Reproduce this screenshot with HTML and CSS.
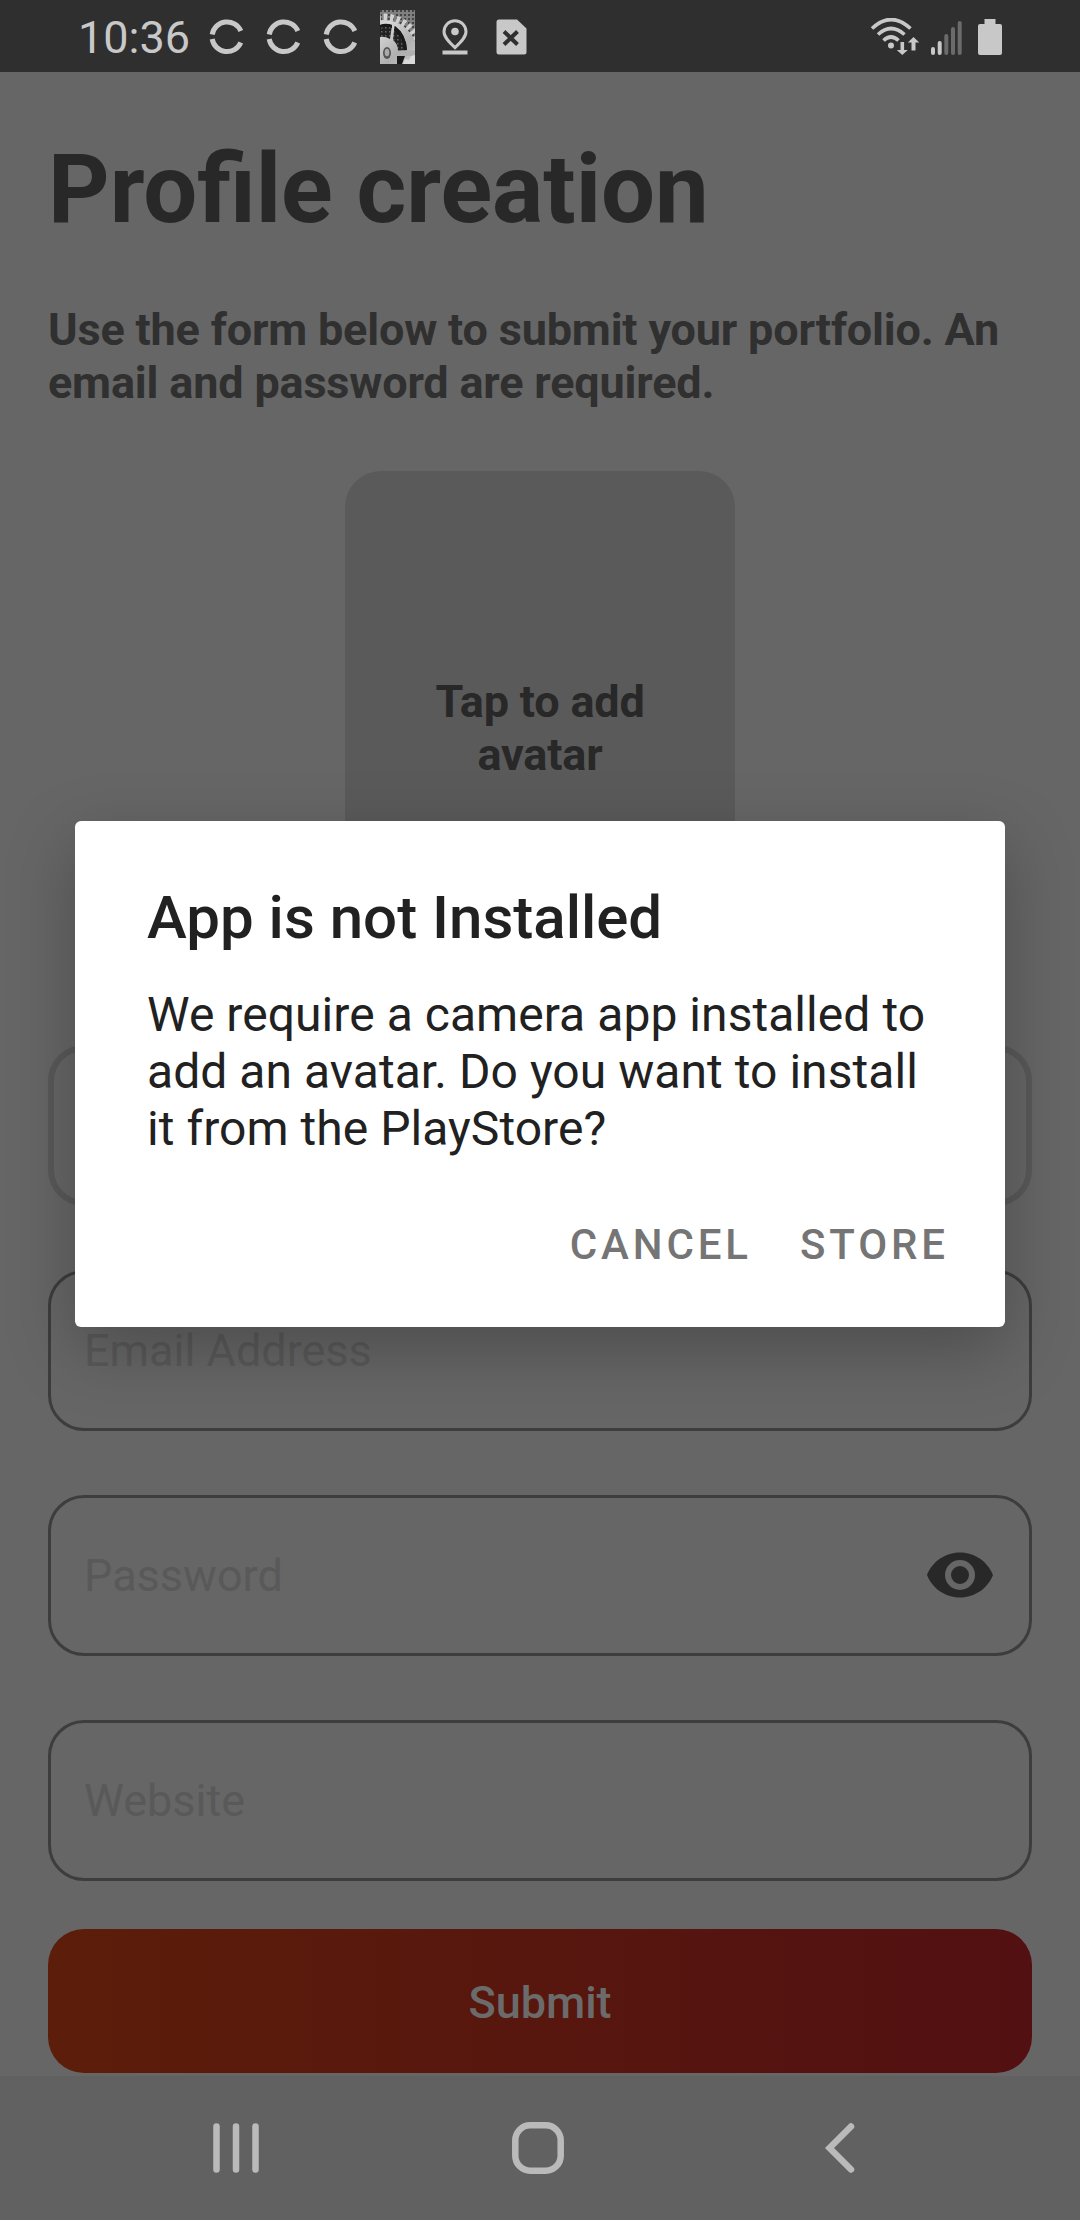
FILE: index.html
```html
<!DOCTYPE html>
<html lang="en">
<head>
<meta charset="utf-8">
<title>Profile creation</title>
<link rel="stylesheet" href="styles.css">
</head>
<body>
<div class="screen">
  <header class="status">
    <span class="clock">10:36</span>
    <div class="notices">
      <svg class="sync" viewBox="0 0 36 36"><path d="M3.200 15.500A15 15 0 0 1 31.800 12M3.200 20A15 15 0 0 0 31.800 23.500"/></svg>
      <svg class="sync" viewBox="0 0 36 36"><path d="M3.200 15.500A15 15 0 0 1 31.800 12M3.200 20A15 15 0 0 0 31.800 23.500"/></svg>
      <svg class="sync" viewBox="0 0 36 36"><path d="M3.200 15.500A15 15 0 0 1 31.800 12M3.200 20A15 15 0 0 0 31.800 23.500"/></svg>
      <svg class="gear" viewBox="0 0 35 54">
        <defs>
          <linearGradient id="metal" x1="0" y1="0" x2="1" y2="1"><stop offset="0" stop-color="#aaa"/><stop offset=".3" stop-color="#d8d8d8"/><stop offset=".6" stop-color="#b0b0b0"/><stop offset="1" stop-color="#dcdcdc"/></linearGradient>
          <pattern id="mesh" width="4" height="4" patternUnits="userSpaceOnUse"><rect width="4" height="4" fill="#808080"/><rect width="2" height="2" fill="#444"/></pattern>
          <pattern id="grille" width="4" height="4" patternUnits="userSpaceOnUse"><rect width="4" height="4" fill="#222"/><rect x="1" y="1" width="1.500" height="1.500" fill="#666"/></pattern>
        </defs>
        <rect width="35" height="54" fill="url(#mesh)"/>
        <path d="M26 37h9v17H26z" fill="#2a2a2a"/>
        <circle cx="4" cy="43" r="36" fill="none" stroke="#d0d0d0" stroke-width="7" stroke-dasharray="3.500 3"/>
        <circle cx="4" cy="43" r="33" fill="url(#metal)"/>
        <path d="M0 15Q6 13 12 15L10 29Q5 26 0 27z" fill="url(#grille)"/>
        <path d="M0 15Q6 12.500 12 15v3Q6 15 0 18z" fill="#181818"/>
        <path d="M14.500 16Q26 24 27 40l-9 1Q18 34 13 30z" fill="url(#grille)"/>
        <path d="M15 16Q26 24 27 40l-3 .500Q23 28 14.500 20zM17 46h8l-3 8h-5z" fill="#1a1a1a"/>
        <path d="M18 40.500h17V46H18z" fill="#b0b0b0"/>
        <path d="M23 54l2-5 4 1 2-4 4-1v9z" fill="#dadada"/>
        <ellipse cx="7" cy="43" rx="4" ry="6" fill="#555"/>
        <ellipse cx="7" cy="42.500" rx="2.300" ry="3.800" fill="#aaa"/>
      </svg>
      <svg class="pin" viewBox="0 0 26 36"><path d="M13 1.800C6.700 1.800 2 6.800 2 12.800 2 18.500 7.500 23.500 13 28.700 18.500 23.500 24 18.500 24 12.800 24 6.800 19.300 1.800 13 1.800z" fill="none" stroke="#c8c8c8" stroke-width="3"/><circle cx="13" cy="12.500" r="3.800" fill="#c8c8c8"/><path d="M.5 31.500h25v4H.5z" fill="#c8c8c8"/></svg>
      <svg class="doc" viewBox="0 0 31 36"><path d="M3 .5h18L30.500 9.500V33q0 2.500-2.500 2.500H3Q.5 35.500.5 33V3Q.5.500 3 .500z" fill="#c8c8c8"/><path d="m8 12.500 13.500 13M21.500 12.500 8 25.500" stroke="#2f2f2f" stroke-width="4"/></svg>
    </div>
    <div class="signals">
      <svg class="wifi" viewBox="0 0 50 38"><g fill="none" stroke="#c8c8c8" stroke-width="3.600"><path d="M2 10.500Q21-7.500 40.500 10.500M8 16.500Q21 4.500 34.500 16.500M13.500 22.500Q21 15.500 28.500 22.500"/></g><circle cx="21" cy="27.500" r="3" fill="#c8c8c8"/><path d="M30.500 24v8h-3.700l5.500 5 5.500-5h-3.700v-8zM41.500 32.500v-8h-3.700l5.700-5.500 5.700 5.500h-3.700v8z" fill="#c8c8c8"/></svg>
      <svg class="cell" viewBox="0 0 32 36"><path d="M2 30v4M8.700 24v10" stroke="#c8c8c8"/><path d="M15.300 17v17M22 10v24M28.700 4v30" stroke="#6b6b6b"/></svg>
      <svg class="battery" viewBox="0 0 24 36"><path d="M6.500 0h11v5H22q2 0 2 2v27q0 2-2 2H2q-2 0-2-2V7q0-2 2-2h4.500z" fill="#c8c8c8"/></svg>
    </div>
  </header>

  <main class="page">
    <h1 class="title">Profile creation</h1>
    <p class="intro">Use the form below to submit your portfolio. An email and password are required.</p>
    <div class="avatar"><span class="avatar-label">Tap to add avatar</span></div>
    <form class="fields">
      <div class="field field-active"></div>
      <div class="field">Email Address</div>
      <div class="field">Password
        <svg class="eye" viewBox="0 0 66 46"><path fill="#282828" fill-rule="evenodd" d="M33 .500C18 .500 5.200 9.800 0 23 5.200 36.200 18 45.500 33 45.500S60.800 36.200 66 23C60.800 9.800 48 .500 33 .500zM33 38A15 15 0 1 1 33 8a15 15 0 0 1 0 30zM33 14a9 9 0 1 0 0 18 9 9 0 0 0 0-18z"/></svg>
      </div>
      <div class="field">Website</div>
    </form>
    <div class="submit">Submit</div>
  </main>

  <nav class="navbar">
    <svg class="nav-recents" viewBox="0 0 46 50"><path d="M3.500 3.500v43M23 3.500v43M42.500 3.500v43"/></svg>
    <svg class="nav-home" viewBox="0 0 52 52"><rect x="3.300" y="3.300" width="45.400" height="45.400" rx="15"/></svg>
    <svg class="nav-back" viewBox="0 0 30 50"><path d="M26 3.500 4.500 25 26 46.500"/></svg>
  </nav>

  <section class="dialog">
    <h2 class="dialog-title">App is not Installed</h2>
    <p class="dialog-text">We require a camera app installed to add an avatar. Do you want to install it from the PlayStore?</p>
    <div class="dialog-actions"><span>CANCEL</span><span>STORE</span></div>
  </section>
</div>
</body>
</html>
```
FILE: styles.css
```css
* { box-sizing: border-box; margin: 0; padding: 0; }
body { font-family: Roboto, sans-serif; background: #666; }
svg { display: block; flex: none; }

.screen { position: relative; width: 1080px; height: 2220px; display: flex; flex-direction: column; overflow: hidden; background: #666; }

.status { height: 72px; flex: none; display: flex; align-items: center; padding: 2px 78px 0; background: #2f2f2f; color: #c8c8c8; }
.clock { width: 131px; font-size: 45px; line-height: 53px; white-space: nowrap; }
.notices { display: flex; align-items: center; }
.sync { width: 36px; height: 36px; margin-right: 21px; fill: none; stroke: #c8c8c8; stroke-width: 5; }
.gear { width: 35px; height: 54px; margin-right: 27px; }
.pin { width: 26px; height: 36px; margin-right: 28px; }
.doc { width: 31px; height: 36px; }
.signals { display: flex; margin-left: auto; align-items: center; }
.wifi { width: 50px; height: 38px; margin-right: 11px; }
.cell { width: 32px; height: 36px; margin-right: 15px; stroke-width: 4; stroke-linecap: round; }
.battery { width: 24px; height: 36px; }

.page { flex: none; height: 2004px; padding: 61px 48px 0; display: flex; flex-direction: column; }
.title { font-size: 95.7px; line-height: 112px; font-weight: 700; color: #282828; }
.intro { margin-top: 58px; font-size: 45px; line-height: 53px; font-weight: 700; letter-spacing: -0.18px; color: #303030; }
.avatar { flex: none; width: 390px; height: 514px; margin: 62px auto 0; border-radius: 36px; background: #5a5a5a; display: flex; align-items: center; justify-content: center; }
.avatar-label { width: 260px; text-align: center; font-size: 45px; line-height: 53px; font-weight: 700; letter-spacing: -0.2px; color: #282828; }
.fields { margin-top: 60px; display: flex; flex-direction: column; gap: 64px; }
.field { height: 161px; border: 3px solid #3d3d3d; border-radius: 36px; padding: 0 36px 0 33px; display: flex; align-items: center; justify-content: space-between; font-size: 45px; color: #595959; }
.field-active { border: 6px solid #595959; }
.eye { width: 66px; height: 46px; margin-bottom: 2px; }
.submit { flex: none; height: 144px; margin-top: 48px; border-radius: 36px; display: flex; align-items: center; justify-content: center; padding-top: 3px; font-size: 45px; font-weight: 500; color: #6b6b6b; background: linear-gradient(90deg, #5c1d0a, #521012); }

.navbar { flex: none; height: 144px; display: flex; align-items: center; padding: 0 225px 0 213px; background: #616161; fill: none; stroke: #bababa; stroke-width: 6.5; stroke-linecap: round; }
.nav-recents { width: 46px; height: 50px; }
.nav-home { width: 52px; height: 52px; margin-left: 253px; }
.nav-back { width: 30px; height: 50px; margin-left: auto; }

.dialog { position: absolute; left: 75px; top: 821px; width: 930px; height: 506px; padding: 62px 56px 0 72px; border-radius: 6px; background: #fff; color: #212121; box-shadow: 0 22px 68px rgba(0,0,0,.25); display: flex; flex-direction: column; }
.dialog-title { font-size: 60px; line-height: 70px; font-weight: 500; }
.dialog-text { margin-top: 33px; font-size: 48px; line-height: 57px; letter-spacing: 0.05px; }
.dialog-actions { margin-top: 63px; display: flex; justify-content: flex-end; gap: 48px; font-size: 42px; line-height: 50px; font-weight: 500; letter-spacing: 3.9px; color: #757575; }
```
